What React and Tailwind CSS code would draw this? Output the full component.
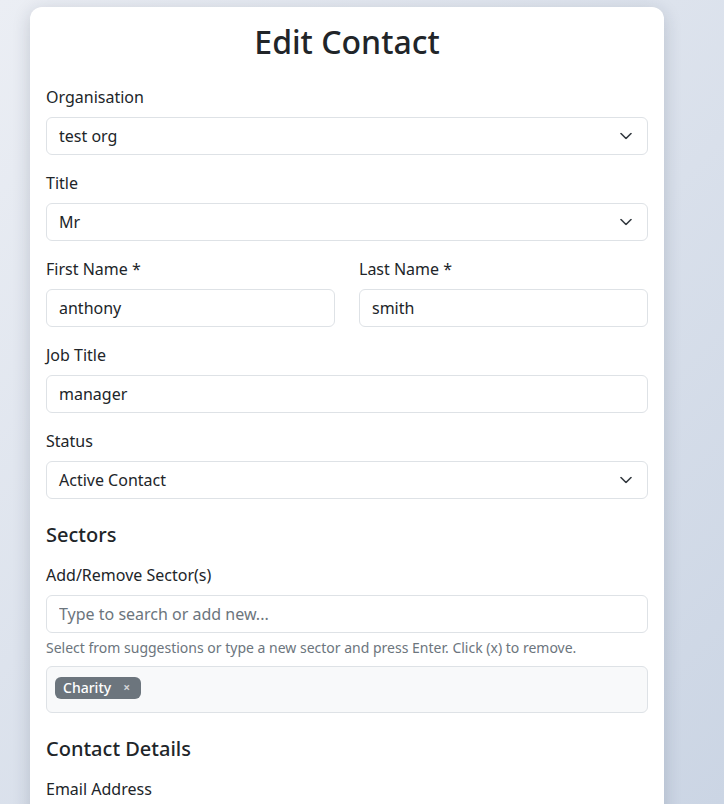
import React from "react";

const Chevron = () => (
  <svg
    className="absolute right-4 top-1/2 -translate-y-1/2 w-3 h-[7px] pointer-events-none"
    viewBox="0 0 12 7"
    fill="none"
    stroke="#343a40"
    strokeWidth="1.6"
    strokeLinecap="round"
    strokeLinejoin="round"
  >
    <path d="M1 1l5 5 5-5" />
  </svg>
);

const Label = ({ children }) => (
  <label className="block mb-2 text-base leading-6 text-[#212529]">{children}</label>
);

const Input = ({ value, placeholder }) => (
  <input
    readOnly
    defaultValue={value}
    placeholder={placeholder}
    className="block w-full h-[38px] px-3 text-base text-[#212529] bg-white border border-[#dee2e6] rounded-md placeholder:text-[#6c757d] outline-none"
  />
);

const Select = ({ value }) => (
  <div className="relative">
    <div className="flex items-center w-full h-[38px] pl-3 pr-9 text-base text-[#212529] bg-white border border-[#dee2e6] rounded-md">
      {value}
    </div>
    <Chevron />
  </div>
);

const App = () => {
  return (
    <div
      className="min-h-screen bg-fixed bg-[linear-gradient(135deg,#ebeef4_0%,#cbd5e4_100%)] pt-[7px] pb-10 pl-[30px]"
      style={{ fontFamily: '"Noto Sans", "Open Sans", sans-serif' }}
    >
      <div className="w-[634px] bg-white rounded-xl shadow-[0_4px_18px_rgba(30,40,60,0.18)] px-4 pt-4 pb-6 text-[#212529]">
        <h1 className="text-[32px] font-medium leading-[1.2] text-center mb-6">
          Edit Contact
        </h1>

        <div className="mb-4">
          <Label>Organisation</Label>
          <Select value="test org" />
        </div>

        <div className="mb-4">
          <Label>Title</Label>
          <Select value="Mr" />
        </div>

        <div className="grid grid-cols-2 gap-6 mb-4">
          <div>
            <Label>First Name *</Label>
            <Input value="anthony" />
          </div>
          <div>
            <Label>Last Name *</Label>
            <Input value="smith" />
          </div>
        </div>

        <div className="mb-4">
          <Label>Job Title</Label>
          <Input value="manager" />
        </div>

        <div className="mb-4">
          <Label>Status</Label>
          <Select value="Active Contact" />
        </div>

        <h5 className="mt-6 mb-4 text-xl font-medium leading-6">Sectors</h5>

        <div className="mb-4">
          <Label>Add/Remove Sector(s)</Label>
          <Input placeholder="Type to search or add new..." />
          <div className="mt-1 text-sm leading-[21px] text-[#6c757d]">
            Select from suggestions or type a new sector and press Enter. Click (x) to remove.
          </div>
          <div className="mt-2 min-h-[47px] flex flex-wrap items-start gap-1 px-2 pt-[10px] pb-2 bg-[#f8f9fa] border border-[#dee2e6] rounded-md">
            <span className="inline-flex items-center h-[22px] pl-2 pr-[11px] gap-[12px] rounded-md bg-[#6c757d] text-white text-sm font-medium">
              Charity
              <span className="text-xs font-bold text-white/70">×</span>
            </span>
          </div>
        </div>

        <h5 className="mt-6 mb-4 text-xl font-medium leading-6">Contact Details</h5>

        <div className="mb-4">
          <Label>Email Address</Label>
          <Input value="anthony.smith@testorg.com" />
        </div>

        <div className="mb-4">
          <Label>Phone Number</Label>
          <Input value="" />
        </div>
      </div>
    </div>
  );
};

export default App;
